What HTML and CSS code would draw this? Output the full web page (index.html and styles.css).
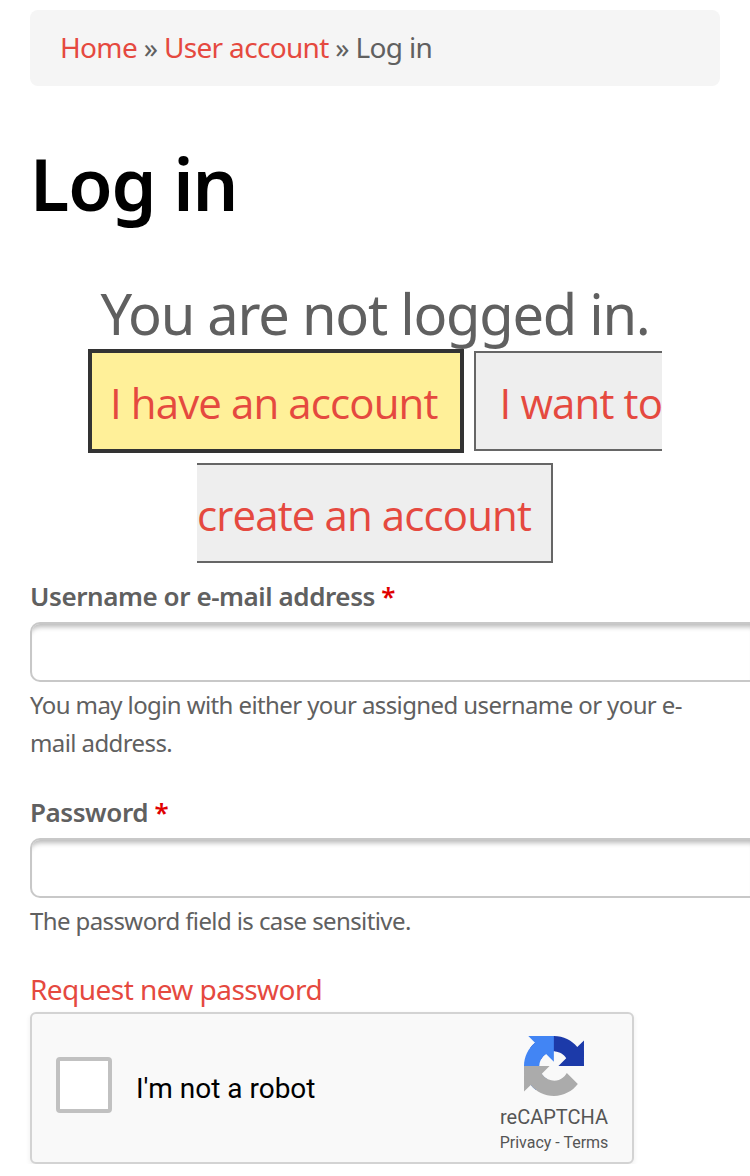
FILE: index.html
```
<!DOCTYPE html>
<html lang="en">
<head>
  <meta charset="UTF-8" />
  <meta name="viewport" content="width=device-width, initial-scale=1.0" />
  <title>Log in</title>
  <link rel="stylesheet" href="styles.css">
</head>
<body>
  <div class="page">
    <nav class="breadcrumb">
      <a href="#">Home</a> » <a href="#">User account</a> » Log in
    </nav>

    <h1>Log in</h1>

    <div class="login-status">
      <p class="status-text">You are not logged in.</p>
      <div class="account-links">
        <a class="account-link active" href="#">I have an account</a>
        <a class="account-link" href="#">I want to create an account</a>
      </div>
    </div>

    <form>
      <div class="form-item">
        <label for="username">Username or e-mail address <span class="required">*</span></label>
        <input type="text" id="username" />
        <p class="description">You may login with either your assigned username or your e-mail address.</p>
      </div>
      <div class="form-item">
        <label for="password">Password <span class="required">*</span></label>
        <input type="password" id="password" />
        <p class="description">The password field is case sensitive.</p>
      </div>

      <a class="request-link" href="#">Request new password</a>

      <div class="captcha">
        <div class="captcha-check"></div>
        <div class="captcha-label">I'm not a robot</div>
        <div class="captcha-brand">
          <svg class="captcha-logo" viewBox="0 0 64 64">
            <path fill="#1c3aa9" d="M64 31.955l-.033-1.37V4.687l-7.16 7.16C50.948 4.674 42.033.093 32.05.093c-10.4 0-19.622 4.96-25.458 12.64l11.736 11.86a15.55 15.55 0 0 1 4.754-5.334c2.05-1.6 4.952-2.906 8.968-2.906.485 0 .86.057 1.135.163 4.976.393 9.288 3.14 11.828 7.124l-8.307 8.307L64 31.953" />
            <path fill="#4285f4" d="M31.862.094l-1.37.033H4.594l7.16 7.16C4.58 13.147 0 22.06 0 32.046c0 10.4 4.96 19.622 12.64 25.458L24.5 45.768a15.55 15.55 0 0 1-5.334-4.754c-1.6-2.05-2.906-4.952-2.906-8.968 0-.485.057-.86.163-1.135.393-4.976 3.14-9.288 7.124-11.828l8.307 8.307L31.86.095" />
            <path fill="#ababab" d="M.001 32.045l.033 1.37v25.898l7.16-7.16c5.86 7.173 14.774 11.754 24.76 11.754 10.4 0 19.622-4.96 25.458-12.64l-11.736-11.86a15.55 15.55 0 0 1-4.754 5.334c-2.05 1.6-4.952 2.906-8.968 2.906-.485 0-.86-.057-1.135-.163-4.976-.393-9.288-3.14-11.828-7.124l8.307-8.307c-10.522.04-22.4.066-27.295-.005" />
          </svg>
          <div class="captcha-name">reCAPTCHA</div>
          <div class="captcha-terms">Privacy - Terms</div>
        </div>
      </div>
    </form>
  </div>
</body>
</html>
```
FILE: styles.css
```
:root {
  --link: #e5493f;
  --text: #606060;
  --border: #c8c8c8;
}

* {
  box-sizing: border-box;
  margin: 0;
  padding: 0;
}

body {
  background: #fff;
  color: var(--text);
  font-family: 'Noto Sans', sans-serif;
}

a {
  color: var(--link);
  text-decoration: none;
}

.page {
  padding: 10px 30px 0;
}

.breadcrumb {
  height: 76px;
  padding: 0 30px;
  border-radius: 8px;
  background: #f5f5f5;
  font-size: 28px;
  letter-spacing: -0.66px;
  line-height: 75px;
}

h1 {
  margin-top: 48px;
  color: #000;
  font-size: 72px;
  font-weight: 600;
  letter-spacing: -1.1px;
  line-height: 98px;
}

.login-status {
  padding-top: 43px;
  text-align: center;
}

.status-text {
  font-size: 56px;
  letter-spacing: -1.25px;
  line-height: 76px;
}

.account-links {
  height: 224px;
  margin: -4px 40px 0;
  font-family: 'Open Sans', sans-serif;
  font-size: 42px;
  letter-spacing: -0.88px;
  line-height: 112px;
}

.account-link {
  padding: 21px 20px 18px 24px;
  border: 2px solid #666;
  background: #eee;
}

.account-link.active {
  padding: 21px 22px 18px 18px;
  border: 4px solid #333;
  background: #fff099;
}

form {
  padding-top: 3px;
}

.form-item {
  margin-bottom: 28px;
}

label {
  display: block;
  font-size: 26px;
  font-weight: 600;
  letter-spacing: -0.43px;
  line-height: 44px;
}

.required {
  color: #e00000;
}

/* runs off the right side of the page */
input {
  display: block;
  width: calc(100% + 30px);
  height: 60px;
  margin-top: 4px;
  border: 2px solid var(--border);
  border-right: none;
  border-radius: 10px 0 0 10px;
  background: #fff;
  box-shadow: inset 0 7px 5px -4px #bbb;
}

.description {
  margin-top: 4px;
  font-size: 24px;
  letter-spacing: -0.6px;
  line-height: 38px;
}

.request-link {
  display: block;
  font-size: 28px;
  letter-spacing: -0.55px;
  line-height: 43px;
}

.captcha {
  display: flex;
  align-items: center;
  width: 604px;
  height: 152px;
  margin-top: 1px;
  padding-left: 24px;
  border: 2px solid #d3d3d3;
  border-radius: 6px;
  background: #f9f9f9;
  box-shadow: 0 2px 4px 1px rgba(0, 0, 0, 0.05);
  font-family: Roboto, sans-serif;
}

.captcha-check {
  width: 56px;
  height: 56px;
  margin-top: -6px;
  border: 4px solid #c1c1c1;
  border-radius: 4px;
  background: #fff;
}

.captcha-label {
  margin-left: 24px;
  color: #000;
  font-size: 28px;
}

.captcha-brand {
  width: 112px;
  margin-left: auto;
  margin-right: 22px;
  padding-top: 15px;
  color: #555;
  text-align: center;
  white-space: nowrap;
}

.captcha-logo {
  display: block;
  width: 60px;
  height: 60px;
  margin: 0 auto 8px;
}

.captcha-name {
  font-size: 20px;
  line-height: 26px;
}

.captcha-terms {
  font-size: 16px;
  line-height: 25px;
}
```
